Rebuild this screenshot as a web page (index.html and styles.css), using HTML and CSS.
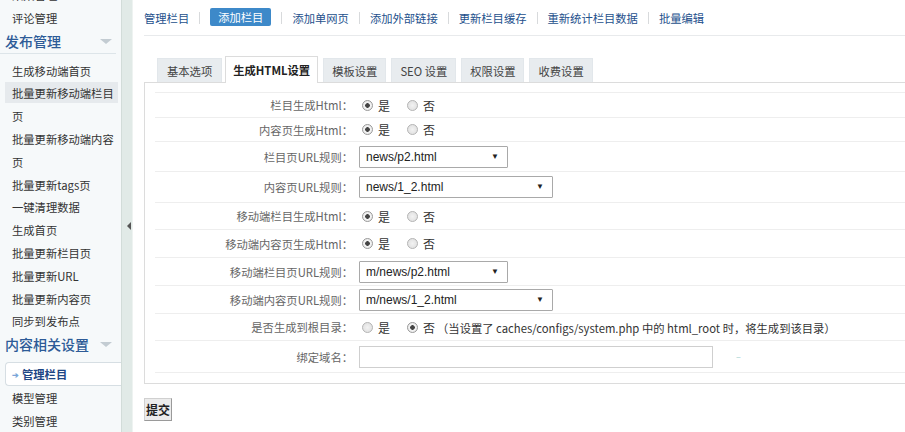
FILE: index.html
```html
<!DOCTYPE html>
<html lang="zh-CN">
<head>
<meta charset="utf-8">
<title>添加栏目</title>
<link rel="stylesheet" href="styles.css">
</head>
<body>
<div class="app">
  <aside class="side">
    <div class="side-list first">
      <div class="side-item">采集管理</div>
      <div class="side-item">评论管理</div>
    </div>
    <div class="side-head has-line"><span>发布管理</span><i class="caret"></i></div>
    <div class="side-list gap">
      <div class="side-item">生成移动端首页</div>
      <div class="side-item hover">批量更新移动端栏目页</div>
      <div class="side-item">批量更新移动端内容页</div>
      <div class="side-item">批量更新tags页</div>
      <div class="side-item">一键清理数据</div>
      <div class="side-item">生成首页</div>
      <div class="side-item">批量更新栏目页</div>
      <div class="side-item">批量更新URL</div>
      <div class="side-item">批量更新内容页</div>
      <div class="side-item">同步到发布点</div>
    </div>
    <div class="side-head"><span>内容相关设置</span><i class="caret"></i></div>
    <div class="side-active"><span class="arrow">➔</span>管理栏目</div>
    <div class="side-list">
      <div class="side-item">模型管理</div>
      <div class="side-item">类别管理</div>
    </div>
  </aside>
  <div class="strip"><i class="strip-arrow"></i></div>
  <main class="main">
    <nav class="topnav">
      <a class="nav-link">管理栏目</a><span class="sep"></span>
      <a class="nav-link on">添加栏目</a><span class="sep"></span>
      <a class="nav-link">添加单网页</a><span class="sep"></span>
      <a class="nav-link">添加外部链接</a><span class="sep"></span>
      <a class="nav-link">更新栏目缓存</a><span class="sep"></span>
      <a class="nav-link">重新统计栏目数据</a><span class="sep"></span>
      <a class="nav-link">批量编辑</a>
    </nav>
    <div class="tabs">
      <div class="tab">基本选项</div>
      <div class="tab active">生成HTML设置</div>
      <div class="tab">模板设置</div>
      <div class="tab">SEO 设置</div>
      <div class="tab">权限设置</div>
      <div class="tab">收费设置</div>
    </div>
    <div class="panel">
      <table class="form">
        <tr class="r25"><th>栏目生成Html：</th><td><label class="opt"><input type="radio" name="a" checked>是</label><label class="opt"><input type="radio" name="a">否</label></td></tr>
        <tr class="r24"><th>内容页生成Html：</th><td><label class="opt"><input type="radio" name="b" checked>是</label><label class="opt"><input type="radio" name="b">否</label></td></tr>
        <tr class="r30"><th>栏目页URL规则：</th><td><div class="select short">news/p2.html<i>▼</i></div></td></tr>
        <tr class="r31"><th>内容页URL规则：</th><td><div class="select long">news/1_2.html<i>▼</i></div></td></tr>
        <tr class="r27"><th>移动端栏目生成Html：</th><td><label class="opt"><input type="radio" name="c" checked>是</label><label class="opt"><input type="radio" name="c">否</label></td></tr>
        <tr class="r28"><th>移动端内容页生成Html：</th><td><label class="opt"><input type="radio" name="d" checked>是</label><label class="opt"><input type="radio" name="d">否</label></td></tr>
        <tr class="r28"><th>移动端栏目页URL规则：</th><td><div class="select short">m/news/p2.html<i>▼</i></div></td></tr>
        <tr class="r28"><th>移动端内容页URL规则：</th><td><div class="select long">m/news/1_2.html<i>▼</i></div></td></tr>
        <tr class="r27"><th>是否生成到根目录：</th><td><label class="opt"><input type="radio" name="e">是</label><label class="opt tight"><input type="radio" name="e" checked>否</label><span class="note">（当设置了 caches/configs/system.php 中的 html_root 时，将生成到该目录）</span></td></tr>
        <tr class="r32"><th>绑定域名：</th><td><div class="domain"><input class="text" type="text"><span class="tip">–</span></div></td></tr>
      </table>
    </div>
    <div class="actions"><button class="submit">提交</button></div>
  </main>
</div>
</body>
</html>
```
FILE: styles.css
```css
* { box-sizing: border-box; }
html, body { margin: 0; padding: 0; }
body {
  width: 905px;
  height: 432px;
  overflow: hidden;
  background: #fff;
  font-family: "Noto Sans CJK SC", "Noto Sans", sans-serif;
  font-size: 11.3px;
  color: #333;
}
.app { display: flex; height: 432px; }

/* sidebar */
.side {
  width: 122px;
  flex: none;
  background: #f6f9fa;
  border-right: 1px solid #d2dcd9;
  overflow: hidden;
}
.side-list.first { margin-top: -16px; }
.side-list.gap { margin-top: 6px; }
.side-item {
  padding: 0 5px 0 12px;
  line-height: 22.8px;
  color: #333;
}
.side-item.hover {
  margin: 0 3px 0 5px;
  padding: 0 0 0 7px;
  background: linear-gradient(#e6eaed, #e6eaed) no-repeat 0 0 / 100% 21px;
}
.side-head {
  display: flex;
  align-items: center;
  justify-content: space-between;
  height: 22px;
  padding: 0 9px 0 5px;
  font-size: 14px;
  color: #2d5b97;
  font-weight: 500;
}
.side-head.has-line {
  height: 24px;
  border-bottom: 1px solid #dde5e9;
  margin-right: 5px;
  padding-right: 4px;
}
.caret {
  width: 0; height: 0;
  border-left: 6px solid transparent;
  border-right: 6px solid transparent;
  border-top: 5px solid #c3ccd2;
}
.side-active {
  margin: 7px 0 1px 5px;
  height: 24px;
  line-height: 22px;
  background: #fff;
  border: 1px solid #d6dee3;
  border-right: none;
  border-radius: 4px 0 0 4px;
  padding-left: 6px;
  font-weight: bold;
  color: #1d4685;
}
.side-active .arrow {
  color: #7aa6d8;
  font-size: 8px;
  margin-right: 3px;
  vertical-align: 1px;
}

/* collapse strip */
.strip {
  width: 11px;
  flex: none;
  background: #e1eae7;
  border-right: 1px solid #eef3f1;
  display: flex;
  align-items: flex-start;
  justify-content: flex-end;
  padding-right: 1px;
}
.strip-arrow {
  margin-top: 222px;
  width: 0; height: 0;
  border-top: 4px solid transparent;
  border-bottom: 4px solid transparent;
  border-right: 4px solid #555;
}

/* main */
.main {
  flex: none;
  width: 900px;
  padding-left: 11px;
}
.topnav {
  display: flex;
  align-items: center;
  height: 36px;
  border-bottom: 1px solid #e8eaec;
}
.nav-link {
  color: #24508c;
  line-height: 18px;
}
.nav-link.on {
  background: #3d89c9;
  color: #fff;
  padding: 0 8px;
  border-radius: 2px;
  margin-top: -1px;
}
.sep {
  width: 1px;
  height: 12px;
  background: #d8dadc;
  margin: 0 10px;
}
.tabs {
  display: flex;
  align-items: flex-end;
  margin-top: 20px;
  padding-left: 13px;
  height: 26px;
  position: relative;
  z-index: 1;
}
.tab {
  height: 24px;
  line-height: 24px;
  padding: 0 8px;
  margin-right: 5px;
  background: #e8ecef;
  border: 1px solid #e2e7eb;
  border-bottom: none;
  color: #444;
}
.tab:first-child { margin-right: 3px; padding: 0 9px; }
.tab.active {
  height: 27px;
  line-height: 27px;
  padding: 0 7px;
  margin-bottom: -1px;
  background: #fff;
  border-color: #dcdcdc;
  font-weight: bold;
  color: #222;
  margin-right: 5px;
}
.panel {
  width: 820px;
  border: 1px solid #dcdcdc;
  padding: 9px 10px 10px;
}
.form {
  width: 100%;
  border-collapse: collapse;
  border-top: 1px solid #eeeeee;
}
.form th, .form td {
  border-bottom: 1px solid #eeeeee;
  padding: 0;
  vertical-align: middle;
}
.form th {
  width: 201px;
  text-align: right;
  font-weight: normal;
  color: #666;
  padding-right: 3px;
  white-space: nowrap;
}
.form td { padding-left: 3px; white-space: nowrap; }
.r24 { height: 24px; }
.r25 { height: 25px; }
.r27 { height: 27px; }
.r28 { height: 28px; }
.r30 { height: 30px; }
.r31 { height: 31px; }
.r32 { height: 32px; }

.opt {
  display: inline-flex;
  align-items: center;
  margin-right: 14px;
  color: #333;
  font-size: 12px;
}
.opt.tight { margin-right: 2px; }
.opt input {
  appearance: none;
  -webkit-appearance: none;
  width: 11px;
  height: 11px;
  margin: 0 5px 0 3px;
  border: 1px solid #b5b5b5;
  border-radius: 50%;
  background: radial-gradient(circle, #f2f2f2 0, #dcdcdc 100%);
  position: relative;
}
.opt input:checked {
  background: radial-gradient(circle, #444 0, #444 2px, #f4f4f4 2.6px, #e2e2e2 100%);
  border-color: #9a9a9a;
}
.note { color: #333; font-size: 11.3px; }

.select {
  position: relative;
  height: 22px;
  line-height: 20px;
  border: 1px solid #a9a9a9;
  border-radius: 1px;
  background: #fff;
  padding-left: 6px;
  font-family: "Liberation Sans", Arial, sans-serif;
  font-size: 12px;
  color: #222;
}
.select.short { width: 149px; }
.select.long { width: 194px; }
.select i {
  position: absolute;
  right: 8px;
  top: 0;
  font-style: normal;
  font-size: 8px;
  color: #222;
}
.domain { display: flex; align-items: center; }
.text {
  width: 354px;
  height: 22px;
  margin: 0;
  border: 1px solid #cfcfcf;
  background: #fff;
}
.tip { margin-left: 23px; color: #9fd0d0; font-size: 9px; }

.actions { margin-top: 14px; }
.submit {
  width: 28px;
  height: 23px;
  padding: 0;
  margin: 0;
  border: 1px solid #9a9a9a;
  border-top-color: #d0d0d0;
  border-left-color: #d0d0d0;
  background: #ececec;
  font-family: "Noto Sans CJK SC", sans-serif;
  font-size: 12px;
  font-weight: bold;
  color: #222;
}
```
